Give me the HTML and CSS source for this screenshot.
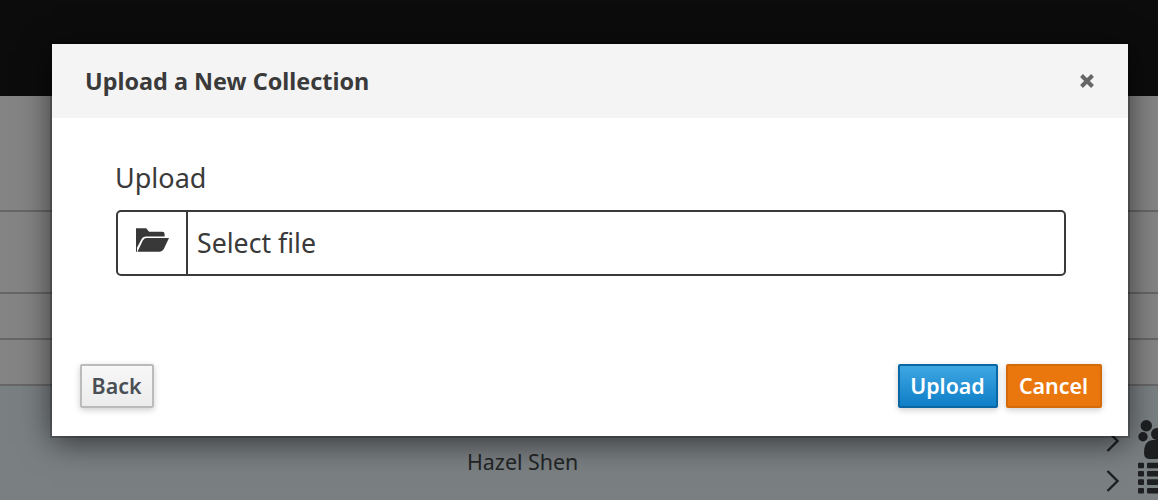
FILE: index.html
```html
<!DOCTYPE html>
<html lang="en">
<head>
<meta charset="utf-8">
<title>Upload a New Collection</title>
<link rel="stylesheet" href="styles.css">
</head>
<body>
<div class="page">
  <div class="topbar"></div>
  <div class="rows">
    <div class="row row-a"></div>
    <div class="row row-b"></div>
    <div class="row row-c"></div>
    <div class="row row-d"></div>
    <div class="row row-person">
      <span class="person">Hazel Shen</span>
      <div class="row-actions">
        <div class="action">
          <svg class="chev" viewBox="0 0 14 22"><path d="M1.500 1l10 10-10 10" fill="none" stroke="#1d1f20" stroke-width="2.400"/></svg>
          <svg class="act-icon" viewBox="0 0 30 40"><g fill="#1d1f20"><circle cx="8.300" cy="4.700" r="5.700"/><circle cx="5" cy="15.700" r="4.700"/><circle cx="19" cy="13" r="6"/><path d="M6 32Q6 20 14 19H30V38H12Q6 38 6 32z"/></g></svg>
        </div>
        <div class="action">
          <svg class="chev" viewBox="0 0 14 22"><path d="M1.500 1l10 10-10 10" fill="none" stroke="#1d1f20" stroke-width="2.400"/></svg>
          <svg class="act-icon" viewBox="0 0 30 40"><g fill="#1d1f20"><rect x="0" y="1.700" width="6" height="5.600" rx="1"/><rect x="9" y="1.700" width="21" height="5.600" rx="1"/><rect x="0" y="10" width="6" height="5.600" rx="1"/><rect x="9" y="10" width="21" height="5.600" rx="1"/><rect x="0" y="18.300" width="6" height="5.600" rx="1"/><rect x="9" y="18.300" width="21" height="5.600" rx="1"/><rect x="0" y="27" width="6" height="5.400" rx="1"/><rect x="9" y="27" width="21" height="5.400" rx="1"/></g></svg>
        </div>
      </div>
    </div>
  </div>
</div>

<div class="modal">
  <header class="modal-head">
    <h1 class="modal-title">Upload a New Collection</h1>
    <svg class="close" viewBox="0 0 16 16"><path d="M2.500 2.500l11 11M13.500 2.500l-11 11" stroke="#666" stroke-width="4" fill="none"/></svg>
  </header>
  <div class="modal-body">
    <div class="field-label">Upload</div>
    <div class="file-input">
      <span class="file-icon">
        <svg viewBox="0 0 34 24" class="folder"><path fill="#383838" d="M0 24V0h10.500l3 3.500H27q2.500 0 2.500 2.500V8.500H10.500Q7 8.500 5.500 11.500L1 20V24zM1.500 24L7 12.500Q8.500 10 11 10H34L28.500 21.500Q27 24 24.500 24z"/></svg>
      </span>
      <span class="file-text">Select file</span>
    </div>
  </div>
  <footer class="modal-foot">
    <button class="btn btn-back" type="button">Back</button>
    <div class="foot-right">
      <button class="btn btn-upload" type="button">Upload</button>
      <button class="btn btn-cancel" type="button">Cancel</button>
    </div>
  </footer>
</div>
</body>
</html>
```

FILE: styles.css
```css
* { box-sizing: border-box; }
html, body { margin: 0; padding: 0; }
body {
  width: 1158px;
  height: 500px;
  overflow: hidden;
  font-family: "Noto Sans", "Open Sans", sans-serif;
  color: #3a3a3a;
  background: #7a7f82;
}
.page { display: flex; flex-direction: column; height: 500px; }
.topbar { height: 96px; flex: none; background: #0c0c0c; }
.rows { flex: 1; min-height: 0; display: flex; flex-direction: column; }
.row { flex: none; border-bottom: 2px solid #666; background: #848484; }
.row-a { height: 116px; }
.row-b { height: 82px; }
.row-c { height: 46px; }
.row-d { height: 46px; }
.row-person {
  flex: 1;
  min-height: 0;
  overflow: hidden;
  background: #7a7f82;
  border-bottom: 0;
  display: flex;
  justify-content: flex-end;
  position: relative;
}
.person {
  position: absolute;
  left: 467px;
  top: 62px;
  font-size: 21.400px;
  line-height: 28px;
  color: #232526;
}
.row-actions {
  display: flex;
  flex-direction: column;
  flex: none;
  padding-top: 35px;
  margin-right: -10px;
}
.action { display: flex; flex: none; align-items: center; gap: 18px; height: 40px; }
.chev { width: 14px; height: 22px; }
.act-icon { width: 30px; height: 40px; overflow: visible; }

.modal {
  position: absolute;
  left: 52px;
  top: 44px;
  width: 1076px;
  height: 392px;
  background: #fff;
  display: flex;
  flex-direction: column;
  box-shadow: 0 0 0 2px rgba(0, 0, 0, 0.2), 0 6px 30px rgba(0, 0, 0, 0.6);
}
.modal-head {
  height: 74px;
  flex: none;
  background: #f4f4f4;
  display: flex;
  align-items: center;
  justify-content: space-between;
  padding: 0 33px;
}
.modal-title {
  margin: 0;
  font-size: 23.400px;
  font-weight: 700;
  color: #3a3a3a;
}
.close { width: 16px; height: 16px; }
.modal-body { flex: 1; padding: 42px 62px 0 64px; }
.field-label { font-size: 27px; line-height: 36px; color: #3a3a3a; margin-left: -1px; }
.file-input {
  margin-top: 14px;
  height: 66px;
  border: 2px solid #3a3a3a;
  border-radius: 5px;
  display: flex;
  align-items: center;
}
.file-icon {
  width: 70px;
  height: 100%;
  padding-bottom: 6px;
  border-right: 2px solid #3a3a3a;
  display: flex;
  align-items: center;
  justify-content: center;
  flex: none;
}
.folder { width: 33px; height: 24px; }
.file-text { padding: 0 0 2px 9px; font-size: 26.700px; color: #3a3a3a; }
.modal-foot {
  display: flex;
  justify-content: space-between;
  padding: 0 26px 28px 28px;
}
.foot-right { display: flex; gap: 8px; }
.btn {
  height: 44px;
  font-family: inherit;
  font-size: 21.400px;
  font-weight: 600;
  border-radius: 2px;
  border: 2px solid;
  padding: 0 1px 2px 0;
  box-shadow: 0 2px 6px rgba(0, 0, 0, 0.2);
}
.btn-back {
  width: 74px;
  color: #4a4f55;
  background: linear-gradient(#f7f7f7, #ececec);
  border-color: #bbb;
}
.btn-upload {
  width: 100px;
  color: #fff;
  background: linear-gradient(#3ea6e2, #0f7fc8);
  border-color: #0a67a3;
}
.btn-cancel {
  width: 96px;
  color: #fff;
  background: #ea770d;
  border-color: #d56a08;
}
```
